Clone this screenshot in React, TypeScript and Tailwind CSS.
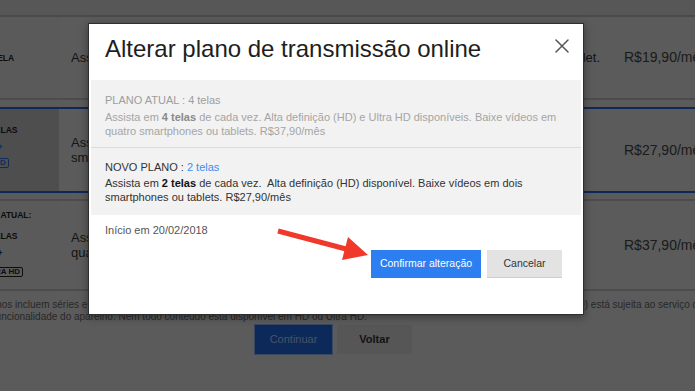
interface BadgeProps {
  label: string
  blue?: boolean
}

function Badge({ label, blue }: BadgeProps) {
  return (
    <span
      className={`inline-block rounded-[2px] border px-[2px] text-[8px] font-bold leading-[8px] ${
        blue ? 'border-[#2f6fe0] text-[#2f6fe0]' : 'border-[#222] text-[#222]'
      }`}
    >
      {label}
    </span>
  )
}

function PlanList() {
  return (
    <div className="flex flex-col">
      {/* 1 tela */}
      <div className="grid h-[81px] grid-cols-[59px_555px_1fr]">
        <div className="flex items-center overflow-hidden bg-[#e1e1e1]">
          <div className="-ml-[60px] w-[120px] text-center text-[8.5px] font-bold leading-[10px] text-[#222]">1 TELA</div>
        </div>
        <div className="flex items-center pl-[12px] pr-[14px] text-[13px] leading-[15px] text-[#333]">
          <p className="w-full text-justify [text-align-last:justify]">
            Assista em 1 tela de cada vez. Baixe vídeos em um smartphone ou tablet.
          </p>
        </div>
        <div className="flex items-center pl-[10px] text-[14px] text-[#444]">R$19,90/mês</div>
      </div>
      <div className="h-[2px] bg-[#bdbdbd]" />
      <div className="h-[7px]" />

      {/* 2 telas, selected */}
      <div className="border-y-2 border-[#1f66e0]">
        <div className="grid h-[82px] grid-cols-[59px_555px_1fr]">
          <div className="overflow-hidden bg-[#c3c3c3]">
            <div className="-ml-[60px] flex w-[120px] flex-col items-center pt-[16px] text-[8.5px] font-bold leading-[10px] text-[#222]">
              <span>2 TELAS</span>
              <span className="mt-[7px] text-[#2f6fe0]">+</span>
              <span className="mt-[5px]"><Badge label="HD" blue /></span>
            </div>
          </div>
          <div className="flex items-center pl-[12px] text-[13px] leading-[15px] text-[#333]">
            <p className="w-[510px] overflow-hidden whitespace-nowrap">
              Assista em 2 telas de cada vez. Alta definição (HD) disponível. Baixe vídeos em dois
              <br />
              smartphones ou tablets.
            </p>
          </div>
          <div className="flex items-center pl-[10px] text-[14px] text-[#444]">R$27,90/mês</div>
        </div>
      </div>
      <div className="h-[6px]" />
      <div className="h-[2px] bg-[#bdbdbd]" />

      {/* 4 telas, plano atual */}
      <div className="grid h-[88px] grid-cols-[59px_555px_1fr]">
        <div className="overflow-hidden bg-[#e1e1e1]">
          <div className="-ml-[60px] flex w-[120px] flex-col items-center pt-[9px] text-[8.5px] font-bold leading-[10px] text-[#222]">
            <span>PLANO ATUAL:</span>
            <span className="mt-[11px]">4 TELAS</span>
            <span className="mt-[7px]">+</span>
            <span className="mt-[8px]"><Badge label="ULTRA HD" /></span>
          </div>
        </div>
        <div className="flex items-center pl-[12px] text-[13px] leading-[15px] text-[#333]">
          <p className="w-[510px] overflow-hidden whitespace-nowrap">
            Assista em 4 telas de cada vez. Alta definição (HD) e Ultra HD disponíveis. Baixe vídeos em
            <br />
            quatro smartphones ou tablets.
          </p>
        </div>
        <div className="flex items-center pl-[10px] text-[14px] text-[#444]">R$37,90/mês</div>
      </div>
      <div className="h-[2px] bg-[#bdbdbd]" />
    </div>
  )
}

function Modal() {
  return (
    <div className="absolute left-[88px] top-[23px] flex h-[292px] w-[496px] flex-col border border-[#2e2e2e] bg-white shadow-[0_2px_8px_rgba(0,0,0,0.4)]">
      <div className="flex h-[56px] items-start justify-between pl-[16px] pr-[14px] pt-[11px]">
        <h2 className="text-[24px] leading-[28px] text-[#1e1e1e]">Alterar plano de transmissão online</h2>
        <button className="mt-[4px] text-[#555]">
          <svg width="14" height="14" viewBox="0 0 14 14" fill="none" stroke="currentColor" strokeWidth="1.5" strokeLinecap="round">
            <path d="M1 1L13 13M13 1L1 13" />
          </svg>
        </button>
      </div>

      <div className="mx-[2px] border-b border-[#dcdcdc] bg-[#f2f2f2] pb-[9px] pl-[14px] pr-[8px] pt-[13px] text-[11px] leading-[14px]">
        <p className="text-[#9d9d9d]">PLANO ATUAL : 4 telas</p>
        <p className="mt-[3px] whitespace-nowrap text-[#a5a5a5]">
          Assista em <b className="text-[#8a8a8a]">4 telas</b> de cada vez. Alta definição (HD) e Ultra HD disponíveis. Baixe vídeos em
          <br />
          quatro smartphones ou tablets. R$37,90/mês
        </p>
      </div>

      <div className="mx-[2px] bg-[#f2f2f2] pb-[11px] pl-[14px] pr-[8px] pt-[12px] text-[11px] leading-[14px] text-[#333]">
        <p>
          NOVO PLANO : <span className="text-[#3b8df6]">2 telas</span>
        </p>
        <p className="mt-[2px] whitespace-nowrap">
          Assista em <b className="text-[#111]">2 telas</b> de cada vez.&nbsp; Alta definição (HD) disponível. Baixe vídeos em dois
          <br />
          smartphones ou tablets. R$27,90/mês
        </p>
      </div>

      <div className="pl-[16px] pr-[21px] pt-[8px]">
        <p className="text-[11px] leading-[14px] text-[#555]">Início em 20/02/2018</p>
        <div className="mt-[13px] flex justify-end gap-[6px]">
          <button className="h-[28px] w-[110px] bg-[#2d7ef0] text-[10.5px] text-white">Confirmar alteração</button>
          <button className="h-[28px] w-[75px] border-b border-[#cfcfcf] bg-[#e3e3e3] text-[10.5px] text-[#333]">Cancelar</button>
        </div>
      </div>
    </div>
  )
}

export default function App() {
  return (
    <div className="relative h-[391px] w-[695px] overflow-hidden bg-[#e4e4e4] font-['Liberation_Sans',Arial,sans-serif]">
      {/* page behind the dialog */}
      <div className="h-[15px] bg-[#dadada]" />
      <div className="h-[2px] bg-[#bababa]" />
      <PlanList />

      <div className="-ml-[60px] whitespace-nowrap pt-[8px] text-[10px] leading-[12px] text-[#666]">
        <p>
          Todos os planos incluem séries e os filmes ilimitados, sem anúncios. A disponibilidade de HD (alta definição) e Ultra HD (ultra alta definição, UHD) está sujeita ao serviço de internet e à
        </p>
        <p>internet e à funcionalidade do aparelho. Nem todo conteúdo está disponível em HD ou Ultra HD.</p>
      </div>

      <div className="mt-[2px] flex gap-[5px] pl-[255px]">
        <button className="h-[29px] w-[77px] bg-[#1f66e0] text-[11px] text-[#b0cdf8] ring-1 ring-[#8fb5f0]">Continuar</button>
        <button className="h-[29px] w-[75px] bg-[#d8d8d8] text-[11px] font-bold text-[#333]">Voltar</button>
      </div>

      {/* dim overlay */}
      <div className="absolute inset-0 bg-black/60" />

      <Modal />

      {/* red annotation arrow */}
      <svg className="absolute left-[270px] top-[222px]" width="105" height="45" viewBox="0 0 105 45">
        <line x1="8" y1="9" x2="76" y2="27" stroke="#f0392a" strokeWidth="5" />
        <polygon points="98,33 78,15 72,38" fill="#f0392a" />
      </svg>
    </div>
  )
}
